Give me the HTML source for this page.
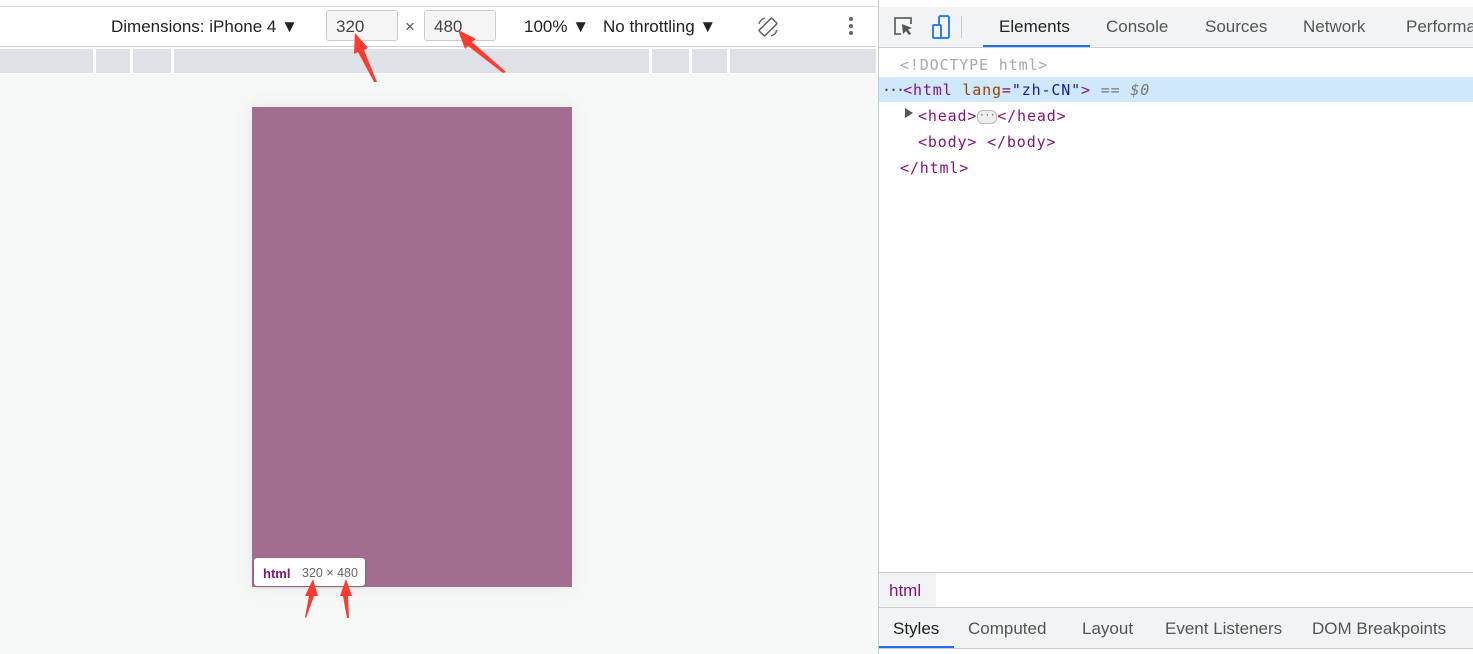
<!DOCTYPE html>
<html><head><style>
body{margin:0;width:1473px;height:654px;position:relative;overflow:hidden;font-family:"Liberation Sans",sans-serif;background:#fff}
.a{position:absolute}
.mono{font-family:"DejaVu Sans Mono","Liberation Mono",monospace;font-size:15px;letter-spacing:0.85px}
.t{font-size:17px;color:#444;position:absolute;top:17px}
</style></head><body>
<div class="a" style="left:0;top:0;width:878px;height:6px;background:#fff;border-bottom:1px solid #dcdcdc"></div>
<div class="a" style="left:0;top:46px;width:876px;height:1px;background:#d0d0d0"></div>
<div class="a" style="left:0;top:49px;width:876px;height:24px;background:#dee1e6"></div>
<div class="a" style="left:93px;top:49px;width:3px;height:24px;background:#fff"></div>
<div class="a" style="left:130px;top:49px;width:3px;height:24px;background:#fff"></div>
<div class="a" style="left:171px;top:49px;width:3px;height:24px;background:#fff"></div>
<div class="a" style="left:649px;top:49px;width:3px;height:24px;background:#fff"></div>
<div class="a" style="left:689px;top:49px;width:3px;height:24px;background:#fff"></div>
<div class="a" style="left:727px;top:49px;width:3px;height:24px;background:#fff"></div>
<div class="a" style="left:0;top:74px;width:878px;height:580px;background:#f7f8f8"></div>
<div class="a" style="left:252px;top:107px;width:320px;height:480px;background:#a16e8f;box-shadow:0 0 18px rgba(0,0,0,0.08)"></div>
<div class="t" style="left:111px;color:#222">Dimensions: iPhone 4 ▼</div>
<div class="a" style="left:326px;top:10px;width:72px;height:31px;border:1px solid #ccc;border-radius:3px;background:#f5f5f5;box-sizing:border-box"></div>
<div class="t" style="left:336px">320</div>
<div class="t" style="left:405px;color:#555">×</div>
<div class="a" style="left:424px;top:10px;width:72px;height:31px;border:1px solid #ccc;border-radius:3px;background:#f5f5f5;box-sizing:border-box"></div>
<div class="t" style="left:434px">480</div>
<div class="t" style="left:524px;color:#222">100% ▼</div>
<div class="t" style="left:603px;color:#222">No throttling ▼</div>
<svg class="a" style="left:756px;top:15px" width="24" height="24"><rect x="8" y="3" width="8" height="18" rx="1" transform="rotate(45 12 12)" fill="none" stroke="#666" stroke-width="1.6"/><path d="M3 9a9 9 0 0 1 6-6M21 15a9 9 0 0 1-6 6" fill="none" stroke="#666" stroke-width="1.4"/></svg>
<div class="a" style="left:849px;top:17px;width:4px;height:4px;border-radius:2px;background:#666;box-shadow:0 7px 0 #666,0 14px 0 #666"></div>
<div class="a" style="left:254px;top:558px;width:111px;height:28px;background:#fff;border-radius:3px;box-shadow:0 1px 3px rgba(0,0,0,.2)"></div>
<div class="a" style="left:263px;top:566px;font-size:13px;font-weight:bold;color:#881280">html</div>
<div class="a" style="left:302px;top:566px;font-size:12.5px;color:#666">320 × 480</div>
<svg class="a" style="left:0;top:0" width="878" height="654">
<g fill="#ff3a2f">
<polygon points="355,33 368,48 364,50 377,82 374,82 358,52 354,54"/>
<polygon points="458,30 476,39 472,42 506,72 503,73 468,46 465,49"/>
<polygon points="313,579 318,596 314,596 306,618 305,617 309,596 305,596"/>
<polygon points="346,579 352,596 348,596 349,618 347,618 343,596 340,596"/>
</g></svg>
<div class="a" style="left:878px;top:0;width:1px;height:654px;background:#ccc"></div>
<div class="a" style="left:879px;top:7px;width:594px;height:40px;background:#f1f3f4;border-bottom:1px solid #cbcdd1"></div>
<svg class="a" style="left:892px;top:15px" width="60" height="26"><path d="M9 19H3V3h16v6" fill="none" stroke="#666" stroke-width="1.8"/><path d="M10 9l10 4-4 1.5 3 4-2 1.5-3-4-3 3z" fill="#555"/><rect x="47" y="1" width="10" height="22" rx="1.5" fill="none" stroke="#1a73e8" stroke-width="1.8"/><rect x="41" y="10" width="8" height="13" rx="1" fill="#f1f3f4" stroke="#1a73e8" stroke-width="1.8"/></svg>
<div class="a" style="left:961px;top:16px;width:1px;height:22px;background:#ccc"></div>
<div class="t" style="left:999px;color:#222">Elements</div>
<div class="a" style="left:983px;top:45px;width:107px;height:2px;background:#1a73e8"></div>
<div class="t" style="left:1106px;color:#555">Console</div>
<div class="t" style="left:1205px;color:#555">Sources</div>
<div class="t" style="left:1303px;color:#555">Network</div>
<div class="t" style="left:1406px;color:#555">Performa</div>
<div class="a mono" style="left:900px;top:56px;color:#aaa">&lt;!DOCTYPE html&gt;</div>
<div class="a" style="left:879px;top:77px;width:594px;height:25px;background:#cfe8fc"></div>
<div class="a mono" style="left:882px;top:81px;color:#881280;letter-spacing:0.85px"><span style="color:#444;letter-spacing:-2px">···</span>&lt;html <span style="color:#994500">lang</span>=<span style="color:#1a1aa6">"zh-CN"</span>&gt; <span style="color:#777;font-style:italic">== $0</span></div>
<div class="a" style="left:905px;top:108px;width:0;height:0;border-left:8px solid #555;border-top:5px solid transparent;border-bottom:5px solid transparent"></div>
<div class="a mono" style="left:918px;top:107px;color:#881280">&lt;head&gt;<span style="display:inline-block;width:18px;height:12px;border-radius:6px;background:#eee;border:1px solid #bbb;vertical-align:middle;font-size:9px;line-height:10px;text-align:center;color:#555;letter-spacing:0">···</span>&lt;/head&gt;</div>
<div class="a mono" style="left:918px;top:133px;color:#881280">&lt;body&gt; &lt;/body&gt;</div>
<div class="a mono" style="left:900px;top:159px;color:#881280">&lt;/html&gt;</div>
<div class="a" style="left:879px;top:572px;width:594px;height:1px;background:#ccc"></div>
<div class="a" style="left:879px;top:573px;width:57px;height:34px;background:#f1f3f4"></div>
<div class="a" style="left:889px;top:581px;font-size:17px;color:#881280">html</div>
<div class="a" style="left:879px;top:607px;width:594px;height:40px;background:#f1f3f4;border-top:1px solid #ccc;border-bottom:1px solid #ccc"></div>
<div class="a" style="left:879px;top:646px;width:75px;height:2px;background:#1a73e8"></div>
<div class="t" style="left:893px;top:619px;color:#222">Styles</div>
<div class="t" style="left:968px;top:619px;color:#555">Computed</div>
<div class="t" style="left:1082px;top:619px;color:#555">Layout</div>
<div class="t" style="left:1165px;top:619px;color:#555">Event Listeners</div>
<div class="t" style="left:1312px;top:619px;color:#555">DOM Breakpoints</div>
</body></html>
